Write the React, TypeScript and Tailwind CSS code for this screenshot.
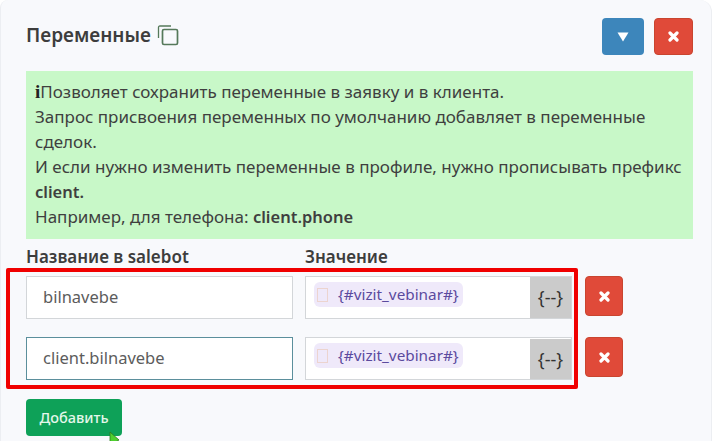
import React from 'react';

const font = "font-['Noto_Sans','Open_Sans',sans-serif]";

const Cross: React.FC = () => (
  <svg width="11" height="11" viewBox="0 0 11 11">
    <path d="M2 2 L9 9 M9 2 L2 9" stroke="#fff" strokeWidth="3.2" strokeLinecap="round" />
  </svg>
);

const CopyIcon: React.FC = () => (
  <svg width="22" height="21" viewBox="0 0 22 21" fill="none" stroke="#55795a">
    <rect x="5.5" y="4.5" width="15" height="15" rx="1.5" strokeWidth="1.7" />
    <path d="M1.5 13 V2.5 Q1.5 1 3 1 H14" strokeWidth="1.3" />
  </svg>
);

const DeleteButton: React.FC<{ className?: string }> = ({ className = '' }) => (
  <button className={`flex items-center justify-center rounded-[4px] bg-[#e04a39] border border-[#c9452f] ${className}`}>
    <Cross />
  </button>
);

const Row: React.FC<{ name: string; active?: boolean }> = ({ name, active }) => (
  <div className="flex items-start h-[43px]">
    <div className={`w-[267px] h-[43px] bg-white border ${active ? 'border-[#5b8f9c]' : 'border-[#d3d6d9]'} pl-[16px] flex items-center text-[16.5px] text-[#5c5c5c]`}>
      {name}
    </div>
    <div className="ml-[12px] w-[267px] h-[43px] bg-white border border-[#d3d6d9] flex justify-between">
      <div className="pt-[5px] pl-[8px]">
        <span className="flex items-center h-[25px] pl-[3px] pr-[4px] rounded-[6px] bg-[#efe9fa] text-[15.3px] text-[#5b4a9e]">
          <span className="w-[11px] h-[14px] border border-[#ecd4cf] mr-[10px]" />
          {'{#vizit_vebinar#}'}
        </span>
      </div>
      <div className={`w-[41px] ${active ? 'mt-[1px]' : ''} bg-[#cbcbcb] flex items-center justify-center text-[18px] text-[#333]`}>
        {'{--}'}
      </div>
    </div>
    <DeleteButton className="ml-[13px] w-[38px] h-[40px]" />
  </div>
);

export default function App() {
  return (
    <div className={`w-[720px] h-[441px] overflow-hidden bg-white ${font} relative`}>
      <div className="w-[712px] h-[441px] bg-[#f8f9fc] rounded-tr-[12px] rounded-tl-[8px] border-l border-r border-[#eceef2] pl-[25px] pr-[18px] pt-[18px]">
        <div className="flex items-start justify-between h-[53px]">
          <div className="flex items-center h-[35px] gap-[6px]">
            <span className="text-[19px] font-semibold text-[#3d3d3d]">Переменные</span>
            <CopyIcon />
          </div>
          <div className="flex gap-[10px]">
            <button className="w-[42px] h-[37px] rounded-[4px] bg-[#3d86bb] flex items-center justify-center">
              <svg width="12" height="10" viewBox="0 0 12 10">
                <path d="M0.5 0.5 H11.5 L6 9.5 Z" fill="#fff" />
              </svg>
            </button>
            <DeleteButton className="w-[39px] h-[37px]" />
          </div>
        </div>

        <div className="w-[667px] h-[168px] bg-[#c8f8c8] px-[9px] pt-[8px] text-[17px] leading-[25px] text-[#3f3f3f]">
          <div className="flex items-baseline">
            <span className="font-['Liberation_Serif',serif] font-bold text-[19px] leading-none text-[#222]">i</span>
            Позволяет сохранить переменные в заявку и в клиента.
          </div>
          <div>Запрос присвоения переменных по умолчанию добавляет в переменные сделок.</div>
          <div>И если нужно изменить переменные в профиле, нужно прописывать префикс <b className="font-semibold text-[16.5px]">client.</b></div>
          <div>Например, для телефона: <b className="font-semibold text-[16.5px]">client.phone</b></div>
        </div>

        <div className="flex mt-[3px] mb-[4px] h-[30px] items-center text-[17px] font-semibold text-[#3d3d3d]">
          <span className="w-[279px]">Название в salebot</span>
          <span>Значение</span>
        </div>

        <div className="flex flex-col gap-[18px]">
          <Row name="bilnavebe" />
          <Row name="client.bilnavebe" active />
        </div>

        <button className="mt-[19px] w-[96px] h-[37px] rounded-[4px] bg-[#0ea158] text-[14.5px] font-medium text-[#e3f7ea]">
          Добавить
        </button>
      </div>

      {/* red highlight drawn over the rows */}
      <div className="absolute left-[6px] top-[268px] w-[572px] h-[121px] border-[4px] border-[#f00000] rounded-[2px]" />

      {/* mouse pointer */}
      <svg className="absolute left-[109px] top-[431px]" width="12" height="12" viewBox="0 0 12 12">
        <path d="M1 1 L1 14 L10 9 Z" fill="#4fd02f" stroke="#2c7a1c" strokeWidth="0.8" />
      </svg>
    </div>
  );
}
